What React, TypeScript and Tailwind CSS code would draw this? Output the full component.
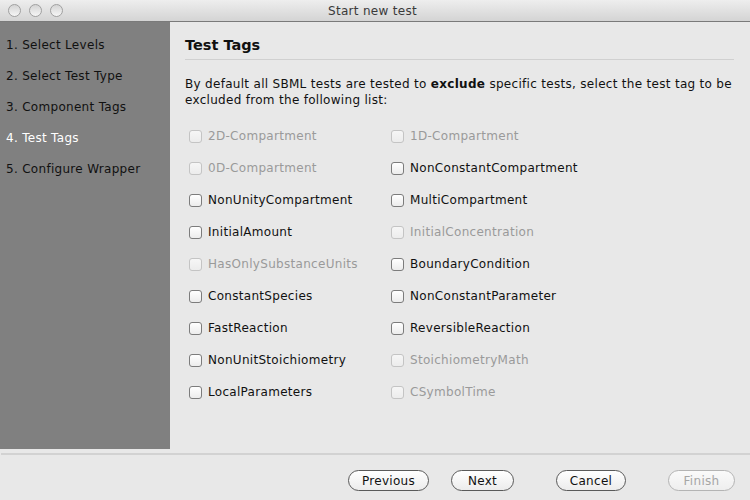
import React from "react";

type Tag = { label: string; enabled: boolean };

const tags: [Tag, Tag][] = [
  [
    { label: "2D-Compartment", enabled: false },
    { label: "1D-Compartment", enabled: false },
  ],
  [
    { label: "0D-Compartment", enabled: false },
    { label: "NonConstantCompartment", enabled: true },
  ],
  [
    { label: "NonUnityCompartment", enabled: true },
    { label: "MultiCompartment", enabled: true },
  ],
  [
    { label: "InitialAmount", enabled: true },
    { label: "InitialConcentration", enabled: false },
  ],
  [
    { label: "HasOnlySubstanceUnits", enabled: false },
    { label: "BoundaryCondition", enabled: true },
  ],
  [
    { label: "ConstantSpecies", enabled: true },
    { label: "NonConstantParameter", enabled: true },
  ],
  [
    { label: "FastReaction", enabled: true },
    { label: "ReversibleReaction", enabled: true },
  ],
  [
    { label: "NonUnitStoichiometry", enabled: true },
    { label: "StoichiometryMath", enabled: false },
  ],
  [
    { label: "LocalParameters", enabled: true },
    { label: "CSymbolTime", enabled: false },
  ],
];

const steps = [
  "1. Select Levels",
  "2. Select Test Type",
  "3. Component Tags",
  "4. Test Tags",
  "5. Configure Wrapper",
];

const TrafficLight = () => (
  <span className="w-[13px] h-[13px] rounded-full border border-[#a0a0a0] bg-gradient-to-b from-[#d4d4d4] to-[#f6f6f6]" />
);

const CheckItem = ({ tag }: { tag: Tag }) => (
  <label className="flex items-center h-[32px]">
    <span
      className={
        tag.enabled
          ? "w-[13px] h-[13px] rounded-[3px] border border-[#7c7c7c] bg-gradient-to-b from-[#ffffff] to-[#ececec]"
          : "w-[13px] h-[13px] rounded-[3px] border border-[#c4c4c4] bg-gradient-to-b from-[#f6f6f6] to-[#ececec]"
      }
    />
    <span
      className={
        tag.enabled ? "ml-[6px] text-[#111111]" : "ml-[6px] text-[#9a9a9a]"
      }
    >
      {tag.label}
    </span>
  </label>
);

const PillButton = ({
  label,
  width,
  disabled,
}: {
  label: string;
  width: string;
  disabled?: boolean;
}) => (
  <button
    className={
      disabled
        ? `${width} h-[21px] rounded-full border border-[#b4b4b4] bg-gradient-to-b from-[#fafafa] to-[#eeeeee] text-[#a6a6a6] leading-none`
        : `${width} h-[21px] rounded-full border border-[#5a5a5a] bg-gradient-to-b from-[#ffffff] to-[#ececec] text-[#111111] leading-none`
    }
  >
    {label}
  </button>
);

export default function App() {
  return (
    <div
      className="w-[750px] h-[500px] bg-[#e8e8e8] flex flex-col text-[12px] tracking-[0.3px] overflow-hidden"
      style={{ fontFamily: '"DejaVu Sans", sans-serif' }}
    >
      {/* title bar */}
      <div className="h-[22px] flex items-center bg-gradient-to-b from-[#eeeeee] to-[#d4d4d4] border-b border-[#7a7a7a]">
        <div className="flex gap-[8px] pl-[8px]">
          <TrafficLight />
          <TrafficLight />
          <TrafficLight />
        </div>
        <div className="flex-1 text-center text-[#3a3a3a] pr-[68px]">
          Start new test
        </div>
      </div>

      {/* body */}
      <div className="flex h-[427px]">
        <div className="w-[170px] bg-[#808080] pt-[8px]">
          {steps.map((s, i) => (
            <div
              key={s}
              className={
                i === 3
                  ? "h-[31px] leading-[31px] pl-[6px] text-white"
                  : "h-[31px] leading-[31px] pl-[6px] text-[#111111]"
              }
            >
              {s}
            </div>
          ))}
        </div>

        <div className="flex-1 pl-[15px] pr-[16px] pt-[13px]">
          <h1 className="font-bold text-[14.5px] tracking-normal leading-[20px] text-[#111111]">
            Test Tags
          </h1>
          <div className="mt-[4px] border-t border-[#d0d0d0]" />
          <p className="mt-[16px] leading-[16px] text-[#111111]">
            By default all SBML tests are tested to <b>exclude</b> specific
            tests, select the test tag to be excluded from the following list:
          </p>
          <div className="mt-[12px] pl-[4px] grid grid-cols-[202px_1fr]">
            {tags.map(([a, b]) => (
              <React.Fragment key={a.label}>
                <CheckItem tag={a} />
                <CheckItem tag={b} />
              </React.Fragment>
            ))}
          </div>
        </div>
      </div>

      {/* footer */}
      <div className="mt-[4px] border-t-2 border-[#d2d2d2] ml-[1px]" />
      <div className="flex items-start pt-[15px] pr-[15px] justify-end">
        <PillButton label="Previous" width="w-[81px]" />
        <div className="ml-[22px]">
          <PillButton label="Next" width="w-[63px]" />
        </div>
        <div className="ml-[42px]">
          <PillButton label="Cancel" width="w-[70px]" />
        </div>
        <div className="ml-[42px]">
          <PillButton label="Finish" width="w-[67px]" disabled />
        </div>
      </div>
    </div>
  );
}
